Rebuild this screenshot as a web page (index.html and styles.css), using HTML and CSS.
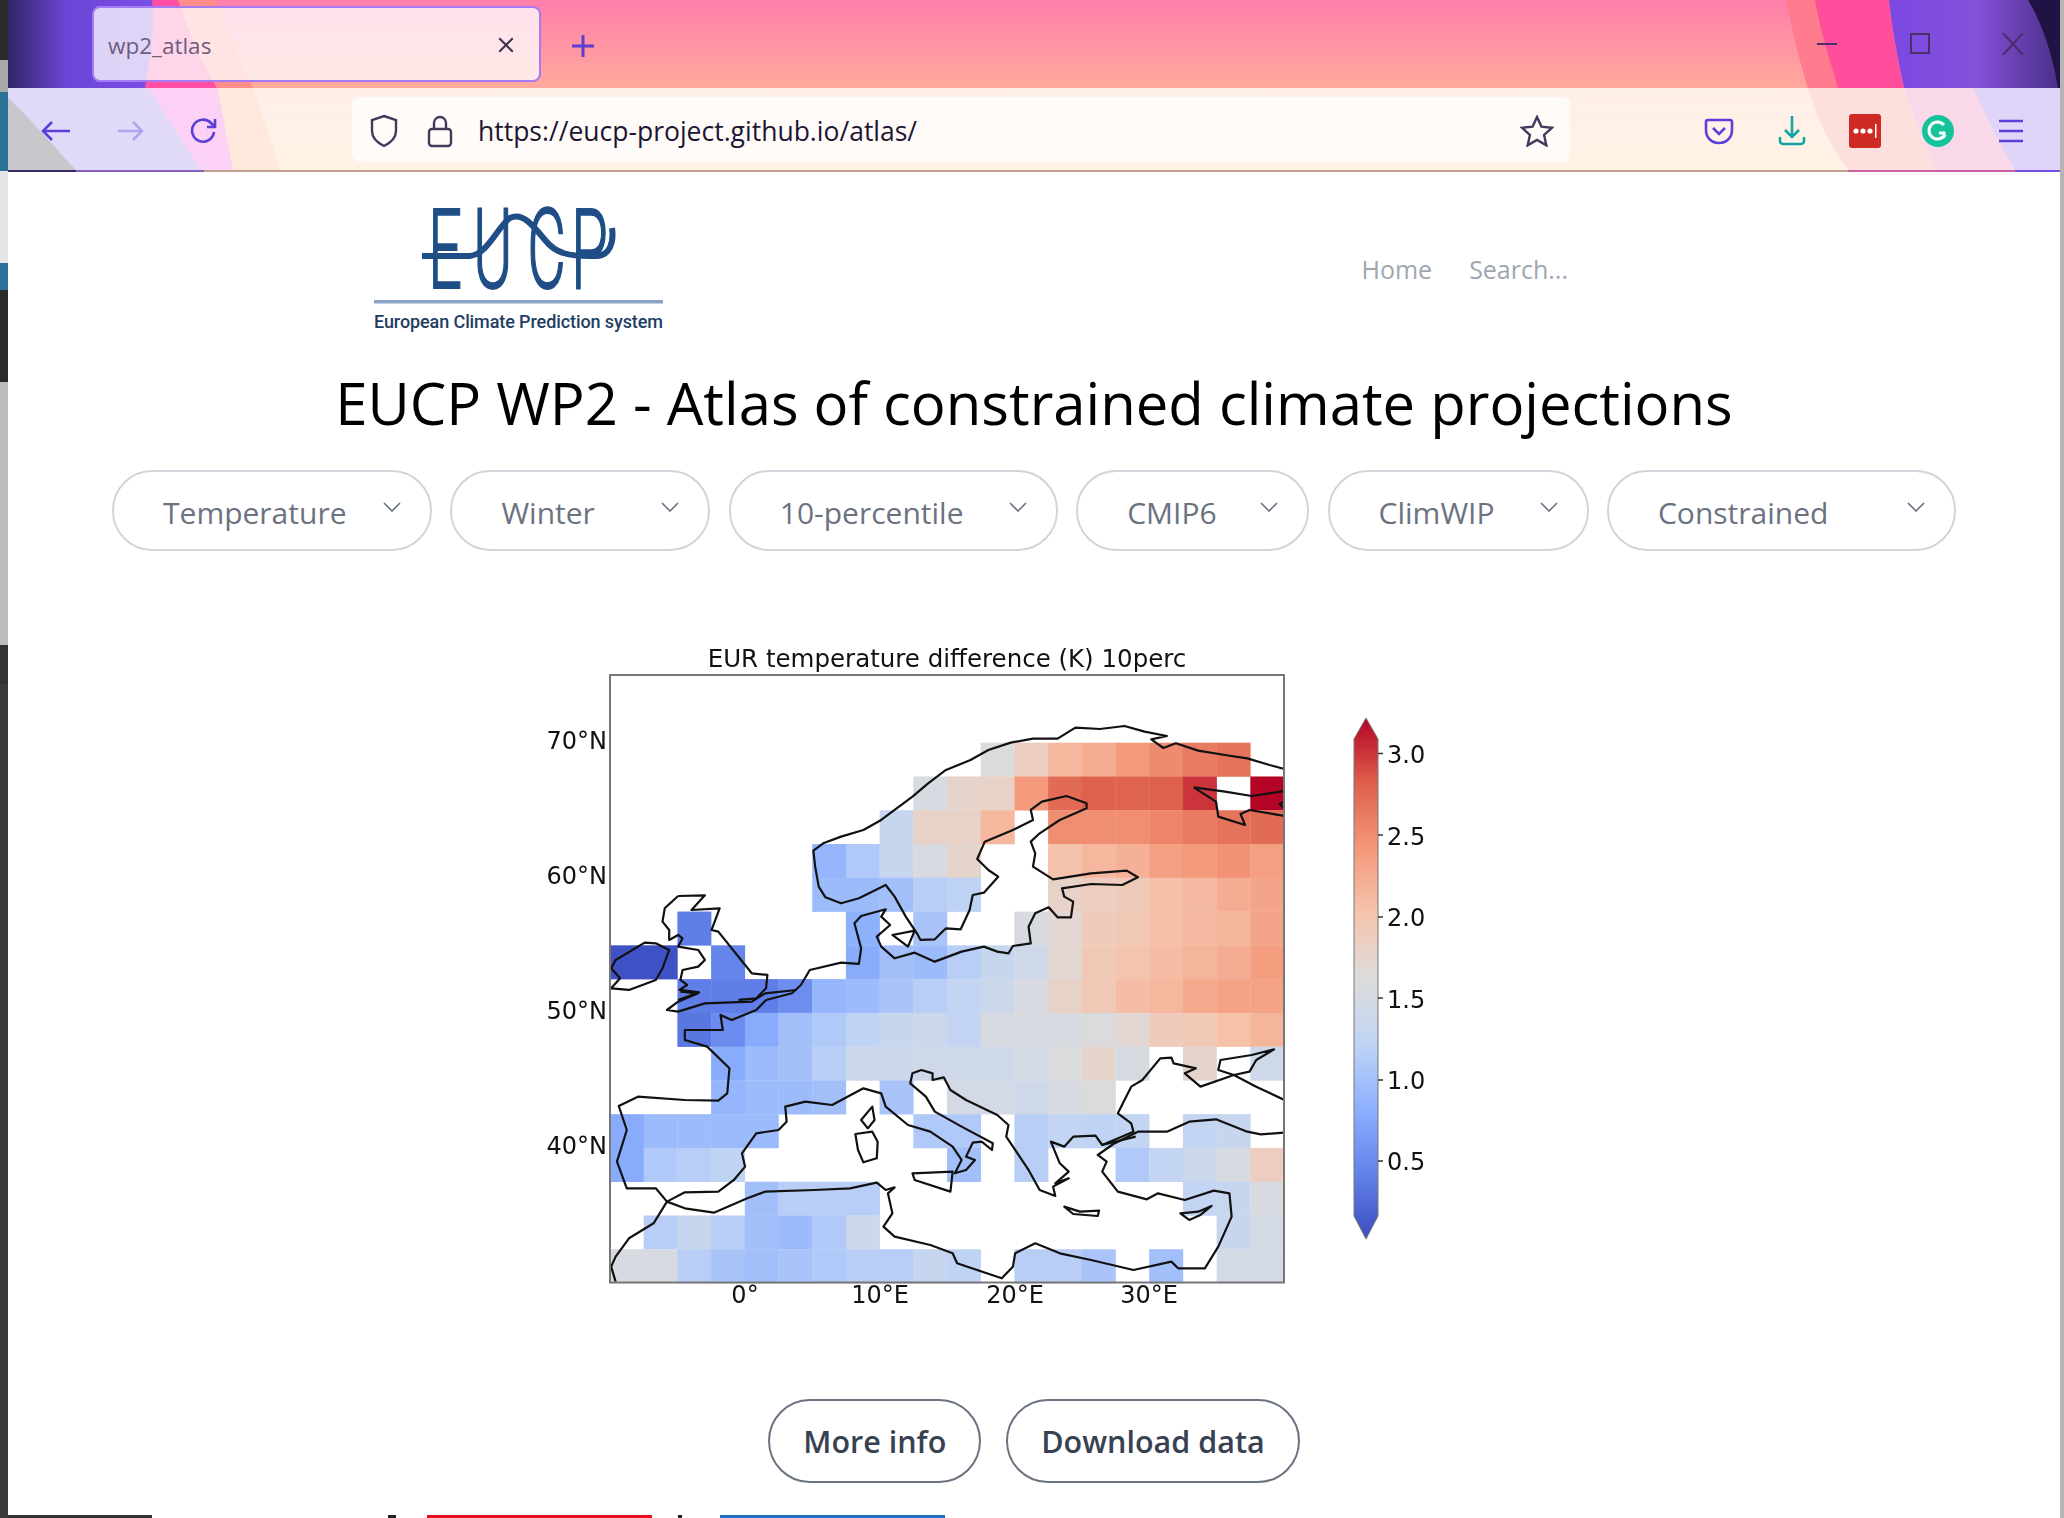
FILE: index.html
```html
<!DOCTYPE html>
<html lang="en">
<head>
    <meta charset="UTF-8">
    <title>wp2_atlas</title>
    <link rel="stylesheet" href="styles.css">
</head>
<body>
    <div class="desktop-edge"></div>

    <div class="window">
        <!-- Browser frame -->
        <div class="browser">
            <svg class="theme" viewBox="8 0 2052 172" width="2052" height="172">
                <defs>
                    <linearGradient id="sky" x1="0" y1="0" x2="0" y2="1">
                        <stop offset="0" stop-color="#ff7eaa"/>
                        <stop offset="1" stop-color="#ffa99c"/>
                    </linearGradient>
                    <linearGradient id="bar" x1="0" y1="0" x2="0" y2="1">
                        <stop offset="0" stop-color="#ffefe9"/>
                        <stop offset="1" stop-color="#fff3e4"/>
                    </linearGradient>
                    <linearGradient id="violet" x1="0" y1="0" x2="1" y2="0">
                        <stop offset="0" stop-color="#33256a"/>
                        <stop offset=".4" stop-color="#6a45d4"/>
                        <stop offset="1" stop-color="#7b4fe4"/>
                    </linearGradient>
                    <linearGradient id="dusk" x1="0" y1="0" x2="1" y2="0">
                        <stop offset="0" stop-color="#7a48e2"/>
                        <stop offset=".5" stop-color="#8650dc"/>
                        <stop offset="1" stop-color="#4a3088"/>
                    </linearGradient>
                </defs>
                <rect x="8" y="0" width="2052" height="88" fill="url(#sky)"/>
                <rect x="8" y="88" width="2052" height="82" fill="url(#bar)"/>

                <!-- left wedges -->
                <path d="M160 0H215C228 30 240 60 253 88H190Z" fill="#ff8e8c"/>
                <path d="M150 0H178C188 30 200 60 217 88H145Z" fill="#ff4fa4"/>
                <path d="M8 0H152C155 30 150 60 145 88H8Z" fill="url(#violet)"/>
                <path d="M253 88C262 115 272 145 280 170H200V88Z" fill="#ffe8dc"/>
                <path d="M217 88C223 115 228 145 233 170H150V88Z" fill="#ffdcd4"/>
                <path d="M8 88H217C223 115 228 145 233 170H8Z" fill="#fbd2f6"/>
                <path d="M8 88H148C165 115 185 145 201 170H8Z" fill="#e0daf8"/>
                <path d="M8 98C30 118 55 148 76 170H8Z" fill="#c8c7cc"/>

                <!-- right wedges -->
                <path d="M1787 0H1889C1892 30 1898 60 1904 88H1808C1800 60 1792 30 1787 0Z" fill="#ff4f9c"/>
                <path d="M1787 0H1815C1820 30 1830 60 1838 88H1808C1800 60 1792 30 1787 0Z" fill="#ff7c8e"/>
                <path d="M1889 0H2060V88H1904C1898 60 1892 30 1889 0Z" fill="url(#dusk)"/>
                <path d="M2028 0H2060V88H2058C2052 50 2040 20 2028 0Z" fill="#211246"/>
                <path d="M1808 88H1904C1912 115 1925 145 1937 170H1848C1830 145 1815 115 1808 88Z" fill="#fde0de"/>
                <path d="M1904 88H1973C1985 115 2000 145 2015 170H1937C1925 145 1912 115 1904 88Z" fill="#f9d8ea"/>
                <path d="M1973 88H2060V170H2015C2000 145 1985 115 1973 88Z" fill="#e0d4f8"/>

                <!-- line under the toolbar -->
                <rect x="8" y="170" width="2052" height="2" fill="#c0a08c"/>
                <rect x="8" y="170" width="68" height="2" fill="#3a2a60"/>
                <rect x="76" y="170" width="128" height="2" fill="#8a60c0"/>
                <rect x="1848" y="170" width="167" height="2" fill="#c860a0"/>
                <rect x="2015" y="170" width="45" height="2" fill="#7a50e0"/>
            </svg>

            <div class="tabbar">
                <div class="tab">
                    <span class="tab-title">wp2_atlas</span>
                    <svg class="tab-close" viewBox="0 0 16 16" width="18" height="18"><path d="M2 2l12 12M14 2L2 14"/></svg>
                </div>
                <svg class="tab-new" viewBox="0 0 26 26" width="26" height="26"><path d="M13 2v22M2 13h22"/></svg>
                <div class="window-btns">
                    <svg viewBox="0 0 22 22" width="22" height="22"><path d="M1 11h20"/></svg>
                    <svg viewBox="0 0 22 22" width="22" height="22"><rect x="2" y="1" width="18" height="19"/></svg>
                    <svg viewBox="0 0 22 22" width="22" height="22"><path d="M1 0l20 22M21 0L1 22"/></svg>
                </div>
            </div>

            <div class="toolbar">
                <svg class="tool" viewBox="0 0 32 32" width="32" height="32"><path d="M30 16H3M12 7l-9 9 9 9"/></svg>
                <svg class="tool faded" viewBox="0 0 32 32" width="32" height="32"><path d="M4 16h24M19 7l9 9-9 9"/></svg>
                <svg class="tool" viewBox="0 0 32 32" width="32" height="32"><path d="M26 17a11 11 0 1 1-3-9l4 4M27 4v8h-8"/></svg>

                <div class="urlbar">
                    <svg class="url-icon" viewBox="0 0 30 34" width="30" height="34"><path d="M15 2l12 4v11c0 7-6 12-12 15C9 29 3 24 3 17V6z"/></svg>
                    <svg class="url-icon lock" viewBox="0 0 28 34" width="28" height="34"><path d="M8 15V9a6 6 0 0 1 12 0v6"/><rect x="3" y="15" width="22" height="17" rx="3"/></svg>
                    <span class="url">https://eucp-project.github.io/atlas/</span>
                    <svg class="url-icon star" viewBox="0 0 34 32" width="34" height="32"><path d="M17 2l4.4 9.6 10.6 1.2-7.9 7.1 2.2 10.4L17 25l-9.300 5.300 2.200-10.400L2 12.800l10.600-1.200z"/></svg>
                </div>

                <div class="addons">
                    <svg class="pocket" viewBox="0 0 32 32" width="32" height="32"><path d="M5 5h22a2 2 0 0 1 2 2v8c0 8-6 13-13 13S3 23 3 15V7a2 2 0 0 1 2-2z"/><path d="M10 13l6 6 6-6"/></svg>
                    <svg class="download" viewBox="0 0 32 32" width="32" height="32"><path d="M16 1v21M9 15l7 7 7-7"/><path d="M4 22v4a3 3 0 0 0 3 3h18a3 3 0 0 0 3-3v-4"/></svg>
                    <svg viewBox="0 0 32 34" width="32" height="34">
                        <rect width="32" height="34" rx="3" fill="#cc2a22"/>
                        <circle cx="7" cy="17" r="2.600" fill="#fff"/>
                        <circle cx="14" cy="17" r="2.600" fill="#fff"/>
                        <circle cx="21" cy="17" r="2.600" fill="#fff"/>
                        <rect x="26" y="10" width="1.500" height="14" fill="#fff"/>
                    </svg>
                    <svg viewBox="0 0 32 32" width="32" height="32">
                        <circle cx="16" cy="16" r="16" fill="#15c39a"/>
                        <path d="M22 10a8.500 8.500 0 1 0 1 9.500l-1.500 3M17 18h6.500" fill="none" stroke="#fff" stroke-width="3"/>
                    </svg>
                    <svg class="menu" viewBox="0 0 32 32" width="32" height="32"><path d="M4 6h24M4 16h24M4 26h24"/></svg>
                </div>
            </div>
        </div>

        <!-- Page -->
        <div class="page">
            <div class="site-head">
                <svg class="logo" viewBox="370 176 300 160" width="300" height="160">
                    <text class="logo-mark" transform="translate(0 288) scale(.53 1)" x="808 893 995 1078">EUCP</text>
                    <path class="logo-wave" d="M422 256H470C488 254 498 226 510 218C522 212 532 224 545 240C556 254 570 256 590 256H596C610 256 614 242 612 228"/>
                    <rect x="374" y="300" width="289" height="3.500" fill="#8ba3c7"/>
                    <text class="logo-name" x="374" y="328" textLength="289" lengthAdjust="spacing">European Climate Prediction system</text>
                </svg>
                <div class="site-nav">
                    <a>Home</a>
                    <a>Search...</a>
                </div>
            </div>

            <h1>EUCP WP2 - Atlas of constrained climate projections</h1>

            <div class="picks">
                <div class="pick pick-var">Temperature<svg viewBox="0 0 18 10" width="18" height="10"><path d="M1 1l8 8 8-8"/></svg></div>
                <div class="pick pick-season">Winter<svg viewBox="0 0 18 10" width="18" height="10"><path d="M1 1l8 8 8-8"/></svg></div>
                <div class="pick pick-stat">10-percentile<svg viewBox="0 0 18 10" width="18" height="10"><path d="M1 1l8 8 8-8"/></svg></div>
                <div class="pick pick-model">CMIP6<svg viewBox="0 0 18 10" width="18" height="10"><path d="M1 1l8 8 8-8"/></svg></div>
                <div class="pick pick-method">ClimWIP<svg viewBox="0 0 18 10" width="18" height="10"><path d="M1 1l8 8 8-8"/></svg></div>
                <div class="pick pick-state">Constrained<svg viewBox="0 0 18 10" width="18" height="10"><path d="M1 1l8 8 8-8"/></svg></div>
            </div>

            <!-- Plot: coordinates are the ones of the picture -->
            <svg class="plot" viewBox="530 631 1008 694" width="1008" height="694">
                <defs>
                    <clipPath id="axes"><rect x="610" y="675" width="674" height="607.500"/></clipPath>
                    <linearGradient id="coolwarm" x1="0" y1="1" x2="0" y2="0">
                        <stop offset="0" stop-color="#3b4cc0"/>
                        <stop offset=".125" stop-color="#6282ea"/>
                        <stop offset=".25" stop-color="#8db0fe"/>
                        <stop offset=".375" stop-color="#c0d4f5"/>
                        <stop offset=".5" stop-color="#dddcdc"/>
                        <stop offset=".625" stop-color="#f5c4ad"/>
                        <stop offset=".75" stop-color="#f4987a"/>
                        <stop offset=".875" stop-color="#de604d"/>
                        <stop offset="1" stop-color="#b40426"/>
                    </linearGradient>
                </defs>

                <text class="plot-title" x="947" y="667">EUR temperature difference (K) 10perc</text>

                <g id="cells"></g>

                <g class="coast" clip-path="url(#axes)">
                    <g transform="translate(600 660) scale(.4464 .3333)">
                        <path d="M1533 327L1500 315 1450 295 1400 285 1340 272 1290 250 1262 264 1235 238 1270 228 1220 215 1175 198 1120 207 1065 203 1025 236 970 236 920 248 870 270 830 300 775 330 735 370 700 410 660 450 630 480 590 510 540 530 500 550 478 572 482 620 490 680 505 712 540 730 580 715 640 675 660 710 685 770 710 820 718 840 750 838 775 805 808 808 828 750 835 705 860 698 892 650 870 630 845 597 862 545 925 510 970 480 965 450 990 425 1045 408 1090 430 1090 445 1030 480 985 520 965 545 975 580 970 620 1015 658 1100 640 1180 632 1205 652 1170 675 1100 672 1035 685 1040 710 1060 725 1055 772 1025 772 1005 742 975 760 960 800 965 850 925 858 915 880 890 875 860 860 810 875 750 905 705 878 660 895 630 860 620 830 650 795 630 770 640 748 585 768 570 790 585 865 580 912 540 908 470 930 450 975 430 1000 372 1020"/>
                        <path d="M1330 382L1400 395 1460 408 1533 393M1330 382L1380 425 1385 470 1445 495 1435 462 1455 450 1533 468M1533 425L1522 432 1533 445"/>
                        <path d="M655 825L705 812 690 860Z"/>
                        <path d="M35 900L100 848 125 850 155 870 140 925 125 960 65 990 25 985 45 955 25 925Z"/>
                        <path d="M175 708L235 706 205 750 268 745 250 810 265 815 325 915 340 940 375 945 372 985 350 1015 310 1020M175 708L145 745 140 785 155 810 155 840 175 825 185 835 175 860 220 870 235 900 220 920 185 930 180 960 195 975 178 990 222 997 175 1020"/>
                    </g>
                    <g transform="translate(600 990) scale(.4464 .3333)">
                        <path d="M372 30L350 60 295 90 270 75 275 120 190 120 190 150 240 170 290 235 285 310 265 332 190 330 85 320 42 348 60 420 38 515 60 595 125 595 150 635 190 655 255 668 330 625 370 605 480 600 560 595 620 578 640 600 660 592 645 610 655 670 635 710 660 740 740 765 790 790 800 820 900 865 925 830 930 790 975 760 1030 790 1100 810 1195 840 1280 815 1295 835 1355 835 1385 770 1415 680 1410 610 1375 602 1310 630 1250 610 1225 628 1160 605 1125 545 1135 515 1115 495 1150 462 1205 425 1270 425 1320 395 1380 388 1450 425 1480 433 1533 428"/>
                        <path d="M440 0L370 10 340 35 235 40 175 65 150 60 175 35 220 10 180 5"/>
                        <path d="M150 635L190 607 265 605 300 570 325 530 318 490 350 430 400 420 418 395 415 350 460 335 520 345 590 295 630 310 640 350 690 405 740 425 790 470 810 510 795 550 820 540 840 510 820 500 835 458 855 455 878 480 880 460 810 410 790 395 750 365 730 320 695 280 700 250 720 240 745 250 745 270 770 262 785 300 820 330 890 375 915 405 910 440 930 480 960 540 985 600 1020 618 1015 590 1050 565 1020 580 1050 545 1030 520 1010 455 1040 470 1060 440 1110 437 1125 465 1195 425 1190 400 1160 370 1190 290 1215 270 1255 205 1280 203 1285 220 1335 235 1310 250 1345 290 1420 255 1385 240 1390 210 1460 195 1510 178 1470 210 1455 245 1420 255 1470 290 1533 330"/>
                        <path d="M1125 465L1200 440"/>
                        <path d="M150 635L120 700 65 745 35 800 25 830 35 875"/>
                        <path d="M700 550L790 545 785 605 705 570Z"/>
                        <path d="M572 432L610 425 622 455 620 505 590 517 578 480Z"/>
                        <path d="M585 390L610 350 615 390 600 415Z"/>
                        <path d="M1040 650L1075 665 1118 662 1115 678 1060 672Z"/>
                        <path d="M1300 670L1340 665 1370 648 1345 675 1320 690Z"/>
                    </g>
                </g>

                <rect class="axes-box" x="610" y="675" width="674" height="607.500"/>

                <g class="lat">
                    <text x="607" y="749">70°N</text>
                    <text x="607" y="884">60°N</text>
                    <text x="607" y="1019">50°N</text>
                    <text x="607" y="1154">40°N</text>
                </g>
                <g class="lon">
                    <text x="745" y="1303">0°</text>
                    <text x="880" y="1303">10°E</text>
                    <text x="1015" y="1303">20°E</text>
                    <text x="1149" y="1303">30°E</text>
                </g>

                <path class="colorbar" d="M1366 718L1378 739V1216L1366 1239 1354 1216V739Z"/>
                <path class="bar-ticks" d="M1378 753.500h5M1378 835h5M1378 917h5M1378 998h5M1378 1080h5M1378 1161h5"/>
                <g class="bar-labels">
                    <text x="1387" y="763">3.0</text>
                    <text x="1387" y="845">2.5</text>
                    <text x="1387" y="926">2.0</text>
                    <text x="1387" y="1008">1.5</text>
                    <text x="1387" y="1089">1.0</text>
                    <text x="1387" y="1170">0.5</text>
                </g>
            </svg>

            <div class="actions">
                <a class="btn">More info</a>
                <a class="btn">Download data</a>
            </div>

            <!-- top edge of the footer logos -->
            <div class="footer-peek">
                <span class="peek-dark"></span>
                <span class="peek-tick peek-a"></span>
                <span class="peek-red"></span>
                <span class="peek-tick peek-b"></span>
                <span class="peek-blue"></span>
            </div>
        </div>
    </div>

    <div class="desktop-right"></div>

    <script src="map.js"></script>
</body>
</html>
```
FILE: styles.css
```css
html, body {
    margin: 0;
    height: 1518px;
    overflow: hidden;
}

body {
    display: flex;
    background: #fff;
    font-family: "Open Sans", "Noto Sans", sans-serif;
}

.desktop-edge {
    flex: 0 0 8px;
    background: linear-gradient(to bottom,
        #2a2a2a 0 60px, #a8a8a8 60px 92px, #2d7199 92px 171px,
        #e6e6e6 171px 263px, #2d7199 263px 290px, #2a2a2a 290px 382px,
        #bdbdbd 382px 645px, #333 645px 684px, #3a3a3a 684px);
}

.desktop-right {
    flex: 0 0 4px;
    background: #b5b5b5;
}

.window {
    flex: 1;
    min-width: 0;
    display: flex;
    flex-direction: column;
}

/* Browser frame */
.browser {
    position: relative;
    height: 172px;
}

.theme {
    position: absolute;
    top: 0;
    left: 0;
}

.tabbar, .toolbar {
    position: relative;
    display: flex;
    align-items: center;
}

.tabbar {
    height: 88px;
}

.tab {
    display: flex;
    align-items: center;
    justify-content: space-between;
    box-sizing: border-box;
    width: 449px;
    height: 76px;
    margin: 0 0 0 84px;
    padding: 2px 24px 0 14px;
    background: rgba(255, 255, 255, 0.76);
    border: 2px solid #a679f5;
    border-radius: 8px;
}

.tab-title {
    font-size: 22.5px;
    color: #6d5c80;
}

.tab-close path {
    fill: none;
    stroke: #3c3050;
    stroke-width: 1.8;
}

.tab-new {
    margin: 3px 0 0 29px;
}

.tab-new path {
    fill: none;
    stroke: #5b3fd0;
    stroke-width: 3;
}

.window-btns {
    display: flex;
    gap: 71px;
    margin: 0 36px 0 auto;
}

.window-btns path, .window-btns rect {
    fill: none;
    stroke: #4a2f68;
    stroke-width: 2;
}

.toolbar {
    box-sizing: border-box;
    height: 82px;
    padding: 3px 0 0 32px;
}

.tool {
    margin-right: 42px;
}

.tool path, .menu path, .pocket path {
    fill: none;
    stroke: #5b3fd8;
    stroke-width: 2.6;
}

.tool.faded {
    opacity: 0.35;
}

.urlbar {
    display: flex;
    align-items: center;
    box-sizing: border-box;
    width: 1218px;
    height: 65px;
    margin: -3px 0 0 90px;
    padding: 3px 16px 0 17px;
    background: #fffbf8;
    border-radius: 8px;
}

.url-icon path, .url-icon rect {
    fill: none;
    stroke: #44385c;
    stroke-width: 2.4;
}

.url-icon.lock {
    margin-left: 27px;
}

.url {
    margin-left: 24px;
    font-size: 26.5px;
    color: #1c1630;
}

.url-icon.star {
    margin-left: auto;
}

.addons {
    display: flex;
    align-items: center;
    gap: 41px;
    margin-left: 133px;
}

.download path {
    fill: none;
    stroke: #12a5a5;
    stroke-width: 2.6;
}

/* Page */
.page {
    flex: 1;
    display: flex;
    flex-direction: column;
    background: #fff;
}

.site-head {
    display: flex;
    align-items: center;
    justify-content: space-between;
    padding: 4px 492px 0 362px;
}

.logo-mark {
    font-family: Roboto, sans-serif;
    font-size: 112px;
    font-weight: 300;
    fill: #1f4e86;
    stroke: #1f4e86;
    stroke-width: 2;
}

.logo-wave {
    fill: none;
    stroke: #1f4e86;
    stroke-width: 6;
}

.logo-name {
    font-family: Roboto, sans-serif;
    font-size: 18px;
    font-weight: 500;
    fill: #1f3e63;
}

.site-nav {
    display: flex;
    gap: 37px;
    padding-top: 26px;
    font-size: 25px;
    color: #a0a6b0;
}

h1 {
    margin: 32px 0 0;
    text-align: center;
    font-size: 58px;
    font-weight: 400;
    line-height: 70px;
    color: #000;
}

.picks {
    display: flex;
    justify-content: center;
    gap: 18.4px;
    margin-top: 32px;
}

.pick {
    display: flex;
    align-items: center;
    justify-content: space-between;
    box-sizing: border-box;
    height: 81px;
    padding: 3px 29px 0 49px;
    background: #fff;
    border: 2px solid #d1d5db;
    border-radius: 40px;
    font-size: 30px;
    color: #6b7280;
}

.pick svg {
    margin-bottom: 10px;
}

.pick path {
    fill: none;
    stroke: #6b7280;
    stroke-width: 1.6;
}

.pick-var { width: 320px; }
.pick-season { width: 260px; }
.pick-stat { width: 329px; }
.pick-model { width: 233px; }
.pick-method { width: 261px; }
.pick-state { width: 349px; }

.plot {
    align-self: center;
    margin-top: 80px;
    filter: blur(0.5px);
}

.plot text {
    font-family: "DejaVu Sans", sans-serif;
    font-size: 24px;
    fill: #111;
}

.plot .plot-title {
    font-size: 24.5px;
}

.plot-title, .lon {
    text-anchor: middle;
}

.lat {
    text-anchor: end;
}

.coast path {
    fill: none;
    stroke: #111;
    stroke-width: 2.2;
    stroke-linejoin: round;
    vector-effect: non-scaling-stroke;
}

.axes-box {
    fill: none;
    stroke: #777;
    stroke-width: 2;
}

.colorbar {
    fill: url(#coolwarm);
    stroke: #777;
    stroke-width: 1;
}

.bar-ticks {
    stroke: #333;
    stroke-width: 1.5;
}

.actions {
    display: flex;
    justify-content: center;
    gap: 25px;
    margin-top: 74px;
}

.btn {
    display: flex;
    align-items: center;
    box-sizing: border-box;
    height: 84px;
    padding: 0 33px;
    border: 2px solid #6b7280;
    border-radius: 42px;
    font-size: 30.5px;
    font-weight: 600;
    color: #374151;
}

.footer-peek {
    display: flex;
    height: 3px;
    margin-top: auto;
    background: #fff;
}

.peek-dark { width: 144px; background: #333; }
.peek-tick { width: 8px; background: #222; }
.peek-a { margin-left: 236px; }
.peek-red { width: 225px; margin-left: 31px; background: #e8101c; }
.peek-b { width: 4px; margin-left: 26px; }
.peek-blue { width: 225px; margin-left: 38px; background: #1a72c0; }
```
FILE: map.js
```js
// Cell values of the map, one row per latitude band, "_" = no data
const _ = null;
const rows = [
    [_,_,_,_,_,_,_,_,_,_,_,1.6,1.85,2.1,2.2,2.35,2.45,2.55,2.6,_],
    [_,_,_,_,_,_,_,_,_,1.55,1.75,1.8,2.35,2.65,2.72,2.7,2.72,2.9,_,3.09],
    [_,_,_,_,_,_,_,_,1.35,1.8,1.8,2.1,_,2.42,2.42,2.42,2.48,2.55,2.6,2.65],
    [_,_,_,_,_,_,.95,1.15,1.35,1.55,1.75,_,_,2.0,2.1,2.15,2.3,2.35,2.4,2.3],
    [_,_,_,_,_,_,1.0,1.0,1.05,1.2,1.25,_,_,1.8,1.85,1.9,2.03,2.08,2.18,2.25],
    [_,_,.5,_,_,_,_,.9,_,1.1,_,_,1.55,1.7,1.88,1.93,2.03,2.08,2.12,2.25],
    [.2,.2,_,.55,_,_,_,.85,1.05,1.0,1.2,1.35,1.45,1.7,1.92,1.98,2.06,2.12,2.18,2.32],
    [_,_,.5,.5,.5,.62,.95,1.0,1.1,1.2,1.3,1.4,1.55,1.78,1.92,2.05,2.1,2.22,2.27,2.27],
    [_,_,.45,.6,.85,1.05,1.15,1.25,1.35,1.4,1.3,1.55,1.55,1.55,1.6,1.7,1.88,1.93,2.02,2.12],
    [_,_,_,.85,1.0,1.05,1.2,1.4,1.4,1.45,1.45,1.45,1.5,1.6,1.75,1.55,_,1.75,_,1.45],
    [_,_,_,.95,1.0,1.0,1.05,_,1.1,_,1.5,1.5,1.45,1.55,1.6,_,_,_,_,_],
    [.85,1.0,1.0,1.0,1.0,_,_,_,_,1.15,1.15,_,1.2,1.3,1.25,1.3,_,1.3,1.35,_],
    [.85,1.15,1.2,1.25,_,_,_,_,_,_,1.05,_,1.2,_,_,1.15,1.3,1.4,1.55,1.85],
    [_,_,_,_,1.05,1.2,1.2,1.2,_,_,_,_,_,_,_,_,_,1.3,1.35,1.55],
    [_,1.2,1.35,1.2,1.05,1.0,1.15,1.4,_,_,_,_,_,_,_,_,_,_,1.35,1.5],
    [1.55,1.55,1.2,1.1,1.05,1.1,1.15,1.2,1.2,1.35,1.25,_,1.2,1.2,1.1,_,1.05,_,1.5,1.5]
];

const stops = [
    [59,76,192], [98,130,234], [141,176,254], [192,212,245], [221,220,220],
    [245,196,173], [244,152,122], [222,96,77], [180,4,38]
];
const vmin = 0.16, vmax = 3.09;

function coolwarm(v) {
    const t = (v - vmin) / (vmax - vmin) * (stops.length - 1);
    const i = Math.min(Math.floor(t), stops.length - 2);
    const f = t - i;
    const c = stops[i].map((a, k) => Math.round(a + (stops[i + 1][k] - a) * f));
    return `rgb(${c[0]},${c[1]},${c[2]})`;
}

const cells = document.getElementById("cells");
const size = 33.7;
const rowSize = 33.77;

rows.forEach((row, r) => {
    row.forEach((v, c) => {
        if (v === null) return;
        const rect = document.createElementNS("http://www.w3.org/2000/svg", "rect");
        rect.setAttribute("x", 610 + c * size);
        rect.setAttribute("y", 742.7 + r * rowSize);
        rect.setAttribute("width", size + 0.3);
        rect.setAttribute("height", rowSize + 0.3);
        rect.setAttribute("fill", coolwarm(v));
        cells.appendChild(rect);
    });
});
```
